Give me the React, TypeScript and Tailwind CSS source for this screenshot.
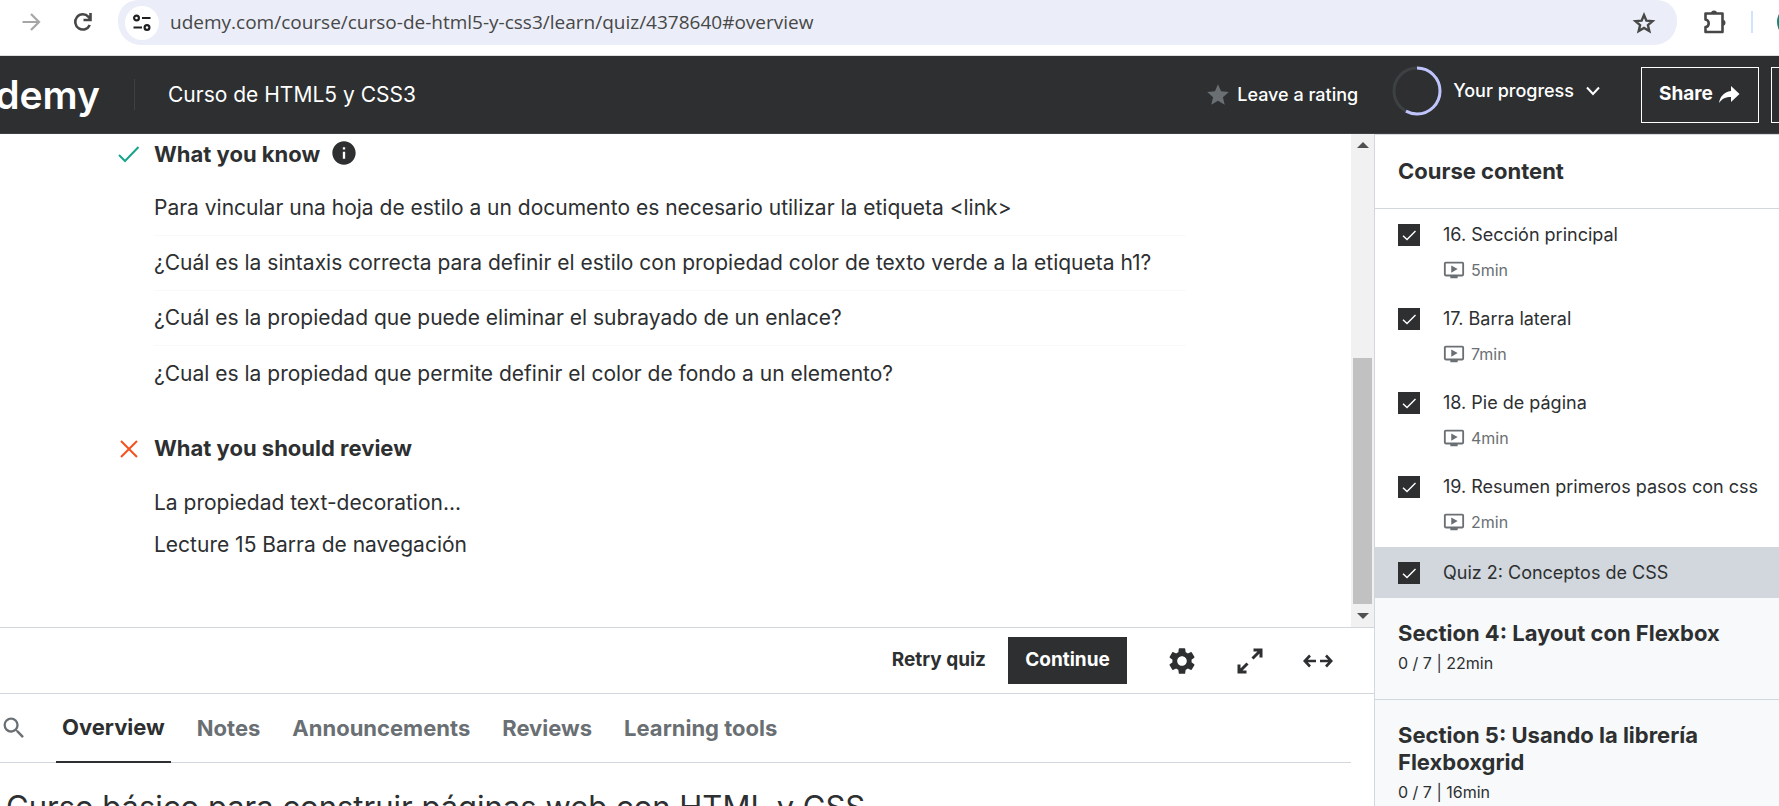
import type { ReactNode } from "react";
import { MdInfo, MdOndemandVideo, MdSearch, MdSettings, MdStar } from "react-icons/md";

const known = [
  "Para vincular una hoja de estilo a un documento es necesario utilizar la etiqueta <link>",
  "¿Cuál es la sintaxis correcta para definir el estilo con propiedad color de texto verde a la etiqueta h1?",
  "¿Cuál es la propiedad que puede eliminar el subrayado de un enlace?",
  "¿Cual es la propiedad que permite definir el color de fondo a un elemento?",
];

const review = ["La propiedad text-decoration...", "Lecture 15 Barra de navegación"];

const lectures = [
  { title: "16. Sección principal", time: "5min" },
  { title: "17. Barra lateral", time: "7min" },
  { title: "18. Pie de página", time: "4min" },
  { title: "19. Resumen primeros pasos con css", time: "2min" },
];

const sections = [
  { title: "Section 4: Layout con Flexbox", info: "0 / 7 | 22min" },
  { title: "Section 5: Usando la librería Flexboxgrid", info: "0 / 7 | 16min" },
];

const tabs = ["Overview", "Notes", "Announcements", "Reviews", "Learning tools"];

function Check({ label, id }: { label: string; id: string }) {
  return (
    <span className="relative flex size-[22px] shrink-0">
      <input id={id} type="checkbox" defaultChecked aria-label={label} className="size-[22px] appearance-none bg-[#2d2f31]" />
      <svg viewBox="0 0 22 22" className="pointer-events-none absolute inset-0 size-[22px]" fill="none" stroke="#fff" strokeWidth="1.4">
        <path d="M5 11.8 9 15.6 17.5 7" />
      </svg>
    </span>
  );
}

function BrowserBar() {
  return (
    <div className="flex h-14 shrink-0 items-start border-b border-[#dddfe1] bg-white text-[#474747]">
      <div className="flex h-11 w-[118px] shrink-0 items-center gap-8 pl-[21px]">
        <button aria-label="Forward" className="text-[#a6a6a6]">
          <svg viewBox="0 0 20 20" className="size-5" fill="none" stroke="currentColor" strokeWidth="2.2">
            <path d="M1.500 10H18M10 2l8 8-8 8" />
          </svg>
        </button>
        <button aria-label="Reload">
          <svg viewBox="0 0 20 20" className="size-5" fill="none" stroke="currentColor" strokeWidth="2.6">
            <path d="M16.800 13A7.600 7.600 0 1 1 15.500 4.800L18 7.300M17.500 1v7h-7" />
          </svg>
        </button>
      </div>
      <div className="flex h-[45px] min-w-0 flex-1 items-center rounded-b-[23px] rounded-t-[20px] bg-[#ebeef8] pl-[7px] pr-[21px]">
        <button aria-label="Site information" className="flex size-[34px] shrink-0 items-center justify-center rounded-full bg-white text-[#1f1f1f]">
          <svg viewBox="0 0 18 18" className="size-[18px]" fill="none" stroke="currentColor" strokeWidth="2.2">
            <circle cx="3.5" cy="4" r="2.400" />
            <path d="M9 4h8.500M0.500 13.500H9" />
            <circle cx="14" cy="13.500" r="2.400" />
          </svg>
        </button>
        <input
          aria-label="Address"
          readOnly
          defaultValue="udemy.com/course/curso-de-html5-y-css3/learn/quiz/4378640#overview"
          className="ml-[11px] min-w-0 flex-1 bg-transparent font-['Open_Sans',sans-serif] text-[19px] text-[#474747] outline-none"
        />
        <button aria-label="Bookmark">
          <svg viewBox="0 0 24 24" className="size-6" fill="none" stroke="currentColor" strokeWidth="2.4">
            <path d="M12 4l2.400 5.600 6.100.5-4.600 4 1.400 6L12 16.900 6.700 20.100l1.400-6-4.600-4 6.100-.5z" />
          </svg>
        </button>
      </div>
      <div className="flex h-11 w-[102px] shrink-0 items-center overflow-hidden pl-[25px]">
        <button aria-label="Extensions" className="shrink-0">
          <svg viewBox="0 0 26 26" className="size-[26px]" fill="none" stroke="currentColor" strokeWidth="2.6" strokeLinejoin="round">
            <path d="M3.500 4.500H20.500V23H3.500V18c2 0 3.200-1.700 3.200-3.700S5.500 10.600 3.500 10.600z" />
            <path d="M9 4.500a3 3 0 0 1 6 0zM20.500 10.800a3 3 0 0 1 0 6z" fill="currentColor" stroke="none" />
          </svg>
        </button>
        <span className="ml-[23px] h-[22px] w-0.5 shrink-0 bg-[#d3e3fd]" />
        <span className="ml-6 size-[34px] shrink-0 rounded-full bg-[#0b8a78]" />
      </div>
    </div>
  );
}

function Header() {
  return (
    <header className="flex h-[78px] shrink-0 items-center overflow-hidden border-b border-[#3e4143] bg-[#2d2f31] text-white">
      <a href="#home" className="flex w-[100px] shrink-0 justify-end text-[39px] font-semibold leading-none">
        udemy
      </a>
      <span className="ml-[34px] h-[31px] w-px shrink-0 bg-[#3e4143]" />
      <a href="#course" className="ml-[33px] shrink-0 text-[21px]">
        Curso de HTML5 y CSS3
      </a>
      <div className="flex-1" />
      <button className="flex shrink-0 items-center gap-1.5 text-lg font-medium">
        <MdStar className="size-[26px] text-[#6a6f73]" />
        Leave a rating
      </button>
      <button className="mb-2 ml-[34px] flex shrink-0 items-center text-lg font-medium">
        <svg viewBox="0 0 50 50" className="size-[50px]" fill="none" strokeWidth="3">
          <circle cx="25" cy="25" r="23" stroke="#3e4143" />
          <circle cx="25" cy="25" r="23" stroke="#c0c4fc" pathLength="100" strokeDasharray="58 100" transform="rotate(-90 25 25)" />
        </svg>
        <span className="ml-[11px]">Your progress</span>
        <svg viewBox="0 0 14 10" className="ml-3 h-2.5 w-3.5" fill="none" stroke="currentColor" strokeWidth="2">
          <path d="m1 1.500 6 6.500 6-6.500" />
        </svg>
      </button>
      <button className="ml-[41px] flex h-14 w-[118px] shrink-0 items-center justify-center gap-1 border border-white text-[19px] font-bold">
        Share
        <svg viewBox="0 0 24 24" className="size-6" fill="currentColor">
          <path d="M14 8V3l8.500 8-8.500 8v-5c-5 0-9 1.500-12 6 1-6 4.500-11 12-12z" />
        </svg>
      </button>
      <div className="ml-3 flex w-2 shrink-0">
        <button aria-label="More options" className="h-14 w-14 shrink-0 border border-white" />
      </div>
    </header>
  );
}

function ResultHeading({ icon, children }: { icon: ReactNode; children: ReactNode }) {
  return (
    <h2 className="flex h-[31px] items-center text-[22px] font-bold">
      <span className="flex w-9 shrink-0">{icon}</span>
      {children}
    </h2>
  );
}

function Quiz() {
  return (
    <div className="flex min-h-0 flex-1">
      <div className="min-w-0 flex-1 overflow-hidden pl-[118px] pr-[165px] pt-[5px]">
        <ResultHeading
          icon={
            <svg viewBox="0 0 22 22" className="size-[22px]" fill="none" stroke="#19a38c" strokeWidth="2">
              <path d="M1 11l6 6L20.500 3" />
            </svg>
          }
        >
          What you know
          <MdInfo className="mb-1 ml-2.5 size-7" />
        </ResultHeading>
        <ul className="ml-9 mt-[11px] text-[21px]">
          {known.map((text) => (
            <li key={text} className="flex h-[55px] items-center whitespace-nowrap border-b border-[#f7f9fa] last:border-0">
              {text}
            </li>
          ))}
        </ul>
        <div className="mt-8">
          <ResultHeading
            icon={
              <svg viewBox="0 0 22 22" className="size-[22px]" fill="none" stroke="#f4511e" strokeWidth="2">
                <path d="M3 3l16 16M19 3L3 19" />
              </svg>
            }
          >
            What you should review
          </ResultHeading>
        </div>
        <ul className="ml-9 mt-[18px] text-[21px]">
          {review.map((text) => (
            <li key={text} className="flex h-[42px] items-center">
              {text}
            </li>
          ))}
        </ul>
      </div>
      <div className="flex w-[23px] shrink-0 flex-col items-center bg-[#f1f1f1] py-2">
        <svg viewBox="0 0 12 6" className="h-1.5 w-3" fill="#505050">
          <path d="M0 6 6 0l6 6z" />
        </svg>
        <div className="flex-1" />
        <div className="mb-[9px] h-[246px] w-[19px] bg-[#c1c1c1]" />
        <svg viewBox="0 0 12 6" className="h-1.5 w-3" fill="#505050">
          <path d="M0 0l6 6 6-6z" />
        </svg>
      </div>
    </div>
  );
}

function QuizBar() {
  return (
    <div className="flex h-[66px] shrink-0 items-center justify-end border-t border-[#d1d7dc] pr-[41px] text-[19px] font-bold">
      <button>Retry quiz</button>
      <button className="ml-[22px] h-[47px] w-[119px] bg-[#2d2f31] text-white">Continue</button>
      <button aria-label="Settings" className="ml-[39px]">
        <MdSettings className="size-8" />
      </button>
      <button aria-label="Fullscreen" className="ml-[39px]">
        <svg viewBox="0 0 26 26" className="size-[26px]" fill="none" stroke="currentColor" strokeWidth="3">
          <path d="M16.500 2H24V9.500M23.500 2.500 15.500 10.500M2 16.500V24H9.500M2.500 23.500l8-8" />
        </svg>
      </button>
      <button aria-label="Expanded view" className="ml-10">
        <svg viewBox="0 0 30 14" className="h-3.5 w-[30px]" fill="none" stroke="currentColor" strokeWidth="2.600">
          <path d="M7 1.500 1.800 7 7 12.500M1.800 7H13M23 1.500 28.200 7 23 12.500M28.200 7H17" />
        </svg>
      </button>
    </div>
  );
}

function Sidebar() {
  return (
    <aside className="w-[405px] shrink-0 overflow-hidden border-l border-[#d1d7dc]">
      <h2 className="flex h-[75px] items-center border-y border-[#d1d7dc] pl-[23px] text-[22px] font-bold">Course content</h2>
      <ul className="pt-0.5 text-lg">
        {lectures.map(({ title, time }, i) => (
          <li key={title} className="flex h-[84px] gap-[23px] pl-[23px] pt-[13px]">
            <Check id={"lecture-" + i} label={title} />
            <div className="whitespace-nowrap">
              <label htmlFor={"lecture-" + i} className="block leading-[22px]">
                {title}
              </label>
              <div className="mt-3 flex items-center gap-1.5 text-base text-[#6a6f73]">
                <MdOndemandVideo className="size-[22px]" />
                {time}
              </div>
            </div>
          </li>
        ))}
        <li className="flex h-[51px] items-center gap-[23px] bg-[#d1d7dc] pl-[23px]">
          <Check id="quiz-2" label="Quiz 2: Conceptos de CSS" />
          <label htmlFor="quiz-2">Quiz 2: Conceptos de CSS</label>
        </li>
      </ul>
      {sections.map(({ title, info }) => (
        <section key={title} className="border-b border-[#d1d7dc] bg-[#f7f9fa] pb-6 pl-[23px] pr-10 pt-[22px]">
          <h3 className="text-[22px] font-bold leading-[27px]">{title}</h3>
          <p className="mt-1 text-base leading-6">{info}</p>
        </section>
      ))}
    </aside>
  );
}

export default function App() {
  return (
    <div className="flex h-screen flex-col overflow-hidden bg-white font-[Inter,sans-serif] text-[#2d2f31]">
      <BrowserBar />
      <Header />
      <div className="flex min-h-0 flex-1">
        <main className="flex min-w-0 flex-1 flex-col">
          <Quiz />
          <QuizBar />
          <div className="flex h-[113px] shrink-0 flex-col overflow-hidden border-t border-[#d1d7dc]">
            <nav className="mr-[23px] flex h-[69px] shrink-0 items-stretch border-b border-[#d1d7dc]">
              <button aria-label="Search" className="w-14 shrink-0 text-[#6a6f73]">
                <MdSearch className="size-7" />
              </button>
              <div className="flex gap-5 text-[22px] font-bold text-[#6a6f73]">
                {tabs.map((tab, i) => (
                  <button
                    key={tab}
                    className={i === 0 ? "-mb-px border-b-2 border-[#2d2f31] px-1.5 text-[#2d2f31]" : "px-1.5"}
                  >
                    {tab}
                  </button>
                ))}
              </div>
            </nav>
            <h1 className="ml-1.5 mt-6 whitespace-nowrap text-[31px] leading-10">
              Curso básico para construir páginas web con HTML y CSS
            </h1>
          </div>
        </main>
        <Sidebar />
      </div>
    </div>
  );
}
